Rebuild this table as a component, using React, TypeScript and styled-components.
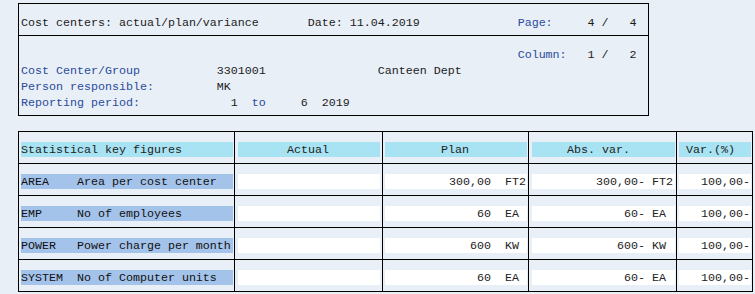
import React from 'react';
import styled, { createGlobalStyle } from 'styled-components';

const GlobalStyle = createGlobalStyle`
  html, body {
    margin: 0;
    padding: 0;
    background: #e9eff7;
  }
  body {
    font-family: "Liberation Mono", "Courier New", monospace;
    font-size: 11.6667px;
    color: #1c1c1c;
  }
`;

const Page = styled.div`
  padding: 3px 0 0 18px;
`;

const ReportHeader = styled.div`
  width: 631px;
  box-sizing: border-box;
  border: 1px solid #000;
`;

const HeaderSection = styled.div`
  padding: 11px 0 4px 2px;

  & + & {
    border-top: 1px solid #000;
  }
`;

const Line = styled.div`
  white-space: pre;
  height: 16px;
  line-height: 16px;
`;

const Label = styled.span`
  color: #2a4b9b;
`;

const Grid = styled.div`
  margin-top: 15px;
  display: grid;
  grid-template-columns: 216px 148px 146px 148px 76px;
  width: max-content;
  border-right: 1px solid #000;
  border-bottom: 1px solid #000;
`;

const Cell = styled.div<{ padL: number; padR: number }>`
  box-sizing: border-box;
  border-left: 1px solid #000;
  border-top: 1px solid #000;
  padding: 10px ${({ padR }) => padR}px 6px ${({ padL }) => padL}px;
`;

type BandKind = 'title' | 'key' | 'value';

const Band = styled.div<{ kind: BandKind; align: 'left' | 'right'; indent?: number; endPad?: number }>`
  height: 14px;
  padding-top: 1px;
  line-height: 14px;
  white-space: pre;
  overflow: hidden;
  text-align: ${({ align }) => align};
  padding-left: ${({ indent = 0 }) => indent * 7}px;
  padding-right: ${({ endPad = 0 }) => endPad}px;
  background: ${({ kind }) =>
    kind === 'title' ? '#a7e3f3' : kind === 'key' ? '#a4c3ea' : '#ffffff'};
  color: ${({ kind }) => (kind === 'key' ? '#111' : '#222')};
`;

const columns = [
  { title: 'Statistical key figures', indent: 0, padL: 2, padR: 1, endPad: 0 },
  { title: 'Actual', indent: 7, padL: 3, padR: 2, endPad: 0 },
  { title: 'Plan', indent: 8, padL: 2, padR: 1, endPad: 1 },
  { title: 'Abs. var.', indent: 5, padL: 3, padR: 1, endPad: 2 },
  { title: 'Var.(%)', indent: 1, padL: 2, padR: 1, endPad: 1 },
];

const rows = [
  { key: 'AREA', text: 'Area per cost center', plan: '300,00', unit: 'FT2' },
  { key: 'EMP', text: 'No of employees', plan: '60', unit: 'EA' },
  { key: 'POWER', text: 'Power charge per month', plan: '600', unit: 'KW' },
  { key: 'SYSTEM', text: 'No of Computer units', plan: '60', unit: 'EA' },
];

const App = () => (
  <Page>
    <GlobalStyle />
    <ReportHeader>
      <HeaderSection>
        <Line>
          {'Cost centers: actual/plan/variance       Date: 11.04.2019              '}
          <Label>Page:</Label>
          {'     4 /   4'}
        </Line>
      </HeaderSection>
      <HeaderSection>
        <Line>
          {' '.repeat(71)}
          <Label>Column:</Label>
          {'   1 /   2'}
        </Line>
        <Line>
          <Label>Cost Center/Group</Label>
          {'           3301001                Canteen Dept'}
        </Line>
        <Line>
          <Label>Person responsible:</Label>
          {'         MK'}
        </Line>
        <Line>
          <Label>Reporting period:</Label>
          {'             1  '}
          <Label>to</Label>
          {'     6  2019'}
        </Line>
      </HeaderSection>
    </ReportHeader>

    <Grid>
      {columns.map((col) => (
        <Cell key={col.title} padL={col.padL} padR={col.padR}>
          <Band kind="title" align="left" indent={col.indent}>
            {col.title}
          </Band>
        </Cell>
      ))}
      {rows.map((row) => (
        <React.Fragment key={row.key}>
          <Cell padL={columns[0].padL} padR={columns[0].padR}>
            <Band kind="key" align="left">
              {row.key.padEnd(8, ' ') + row.text}
            </Band>
          </Cell>
          <Cell padL={columns[1].padL} padR={columns[1].padR}>
            <Band kind="value" align="right" />
          </Cell>
          <Cell padL={columns[2].padL} padR={columns[2].padR}>
            <Band kind="value" align="right" endPad={columns[2].endPad}>
              {`${row.plan}  ${row.unit.padEnd(3, ' ')}`}
            </Band>
          </Cell>
          <Cell padL={columns[3].padL} padR={columns[3].padR}>
            <Band kind="value" align="right" endPad={columns[3].endPad}>
              {`${row.plan}- ${row.unit.padEnd(3, ' ')}`}
            </Band>
          </Cell>
          <Cell padL={columns[4].padL} padR={columns[4].padR}>
            <Band kind="value" align="right" endPad={columns[4].endPad}>
              100,00-
            </Band>
          </Cell>
        </React.Fragment>
      ))}
    </Grid>
  </Page>
);

export default App;
